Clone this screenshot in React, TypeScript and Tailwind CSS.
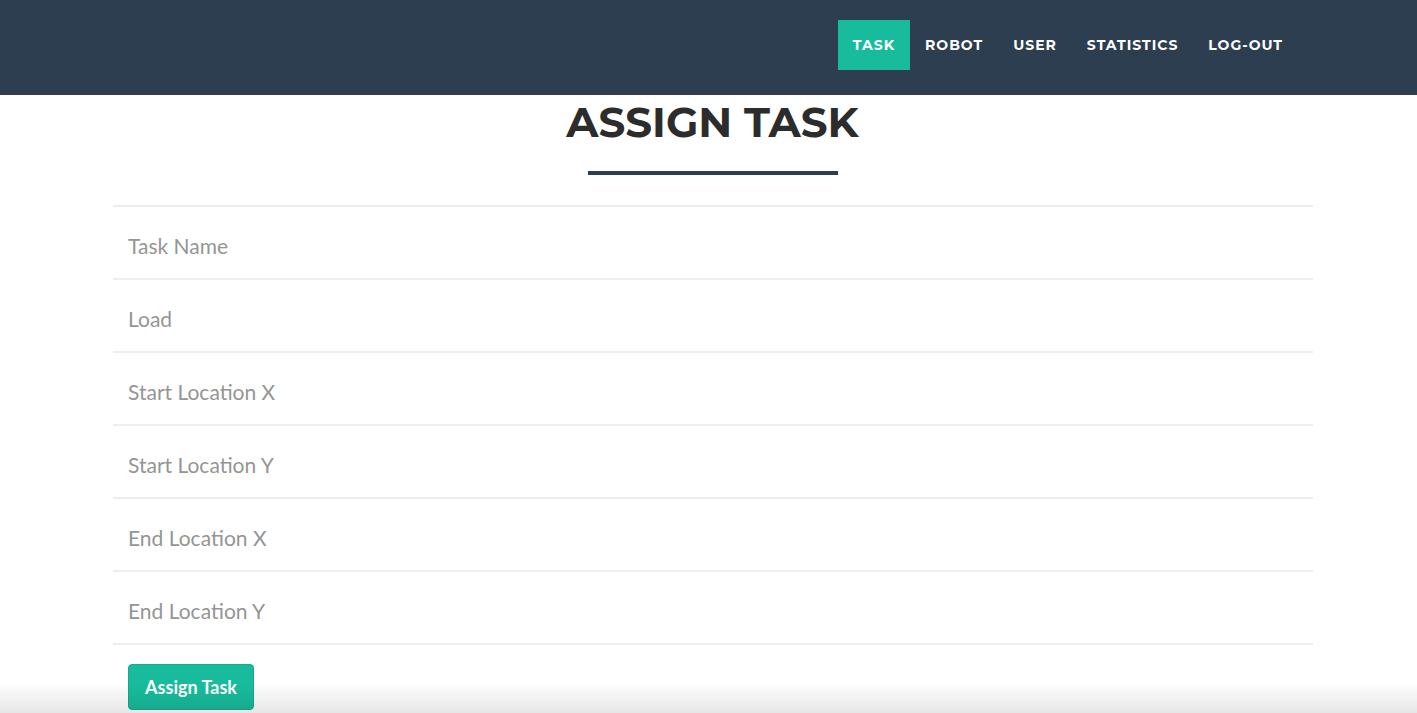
const navItems = ['TASK', 'ROBOT', 'USER', 'STATISTICS', 'LOG-OUT'];

const fields = [
  'Task Name',
  'Load',
  'Start Location X',
  'Start Location Y',
  'End Location X',
  'End Location Y',
];

export default function App() {
  return (
    <div className="min-h-[713px] bg-white relative overflow-hidden">
      <nav className="h-[95px] bg-[#2c3e50] flex items-start justify-end pr-[119px] pt-[20px]">
        <ul className="flex items-center">
          {navItems.map((item, i) => (
            <li key={item}>
              <a
                href="#"
                className={
                  'block h-[50px] leading-[50px] px-[15px] text-white text-[14px] font-bold tracking-[1px] font-["Montserrat","Inter",sans-serif] ' +
                  (i === 0 ? 'bg-[#18bc9c]' : '')
                }
              >
                {item}
              </a>
            </li>
          ))}
        </ul>
      </nav>

      <div className="flex flex-col items-center pl-[8px]">
        <h1 className="mt-[-1px] text-[42px] leading-[56px] font-bold text-[#2c2c2c] font-['Montserrat','Inter',sans-serif]">
          ASSIGN TASK
        </h1>
        <div className="mt-[21px] w-[250px] h-[4px] bg-[#2c3e50]" />
      </div>

      <form className="ml-[113px] mt-[30px] w-[1200px]">
        <div className="border-t-2 border-[#eeeeee]">
          {fields.map((f) => (
            <div key={f} className="h-[73px] border-b-2 border-[#eeeeee] flex items-center px-[15px] pt-[7px]">
              <input
                placeholder={f}
                className="w-full bg-transparent outline-none text-[21px] text-[#555] placeholder:text-[#959595] font-['Lato',sans-serif]"
              />
            </div>
          ))}
        </div>
        <div className="px-[15px] pt-[19px]">
          <button
            type="button"
            className="h-[46px] w-[126px] rounded-[4px] bg-[#18bc9c] border border-[#16a98b] text-white text-[18px] font-bold font-['Lato',sans-serif]"
          >
            Assign Task
          </button>
        </div>
      </form>

      <div className="pointer-events-none absolute left-0 right-0 bottom-0 h-[30px] bg-gradient-to-b from-transparent to-black/10" />
    </div>
  );
}
